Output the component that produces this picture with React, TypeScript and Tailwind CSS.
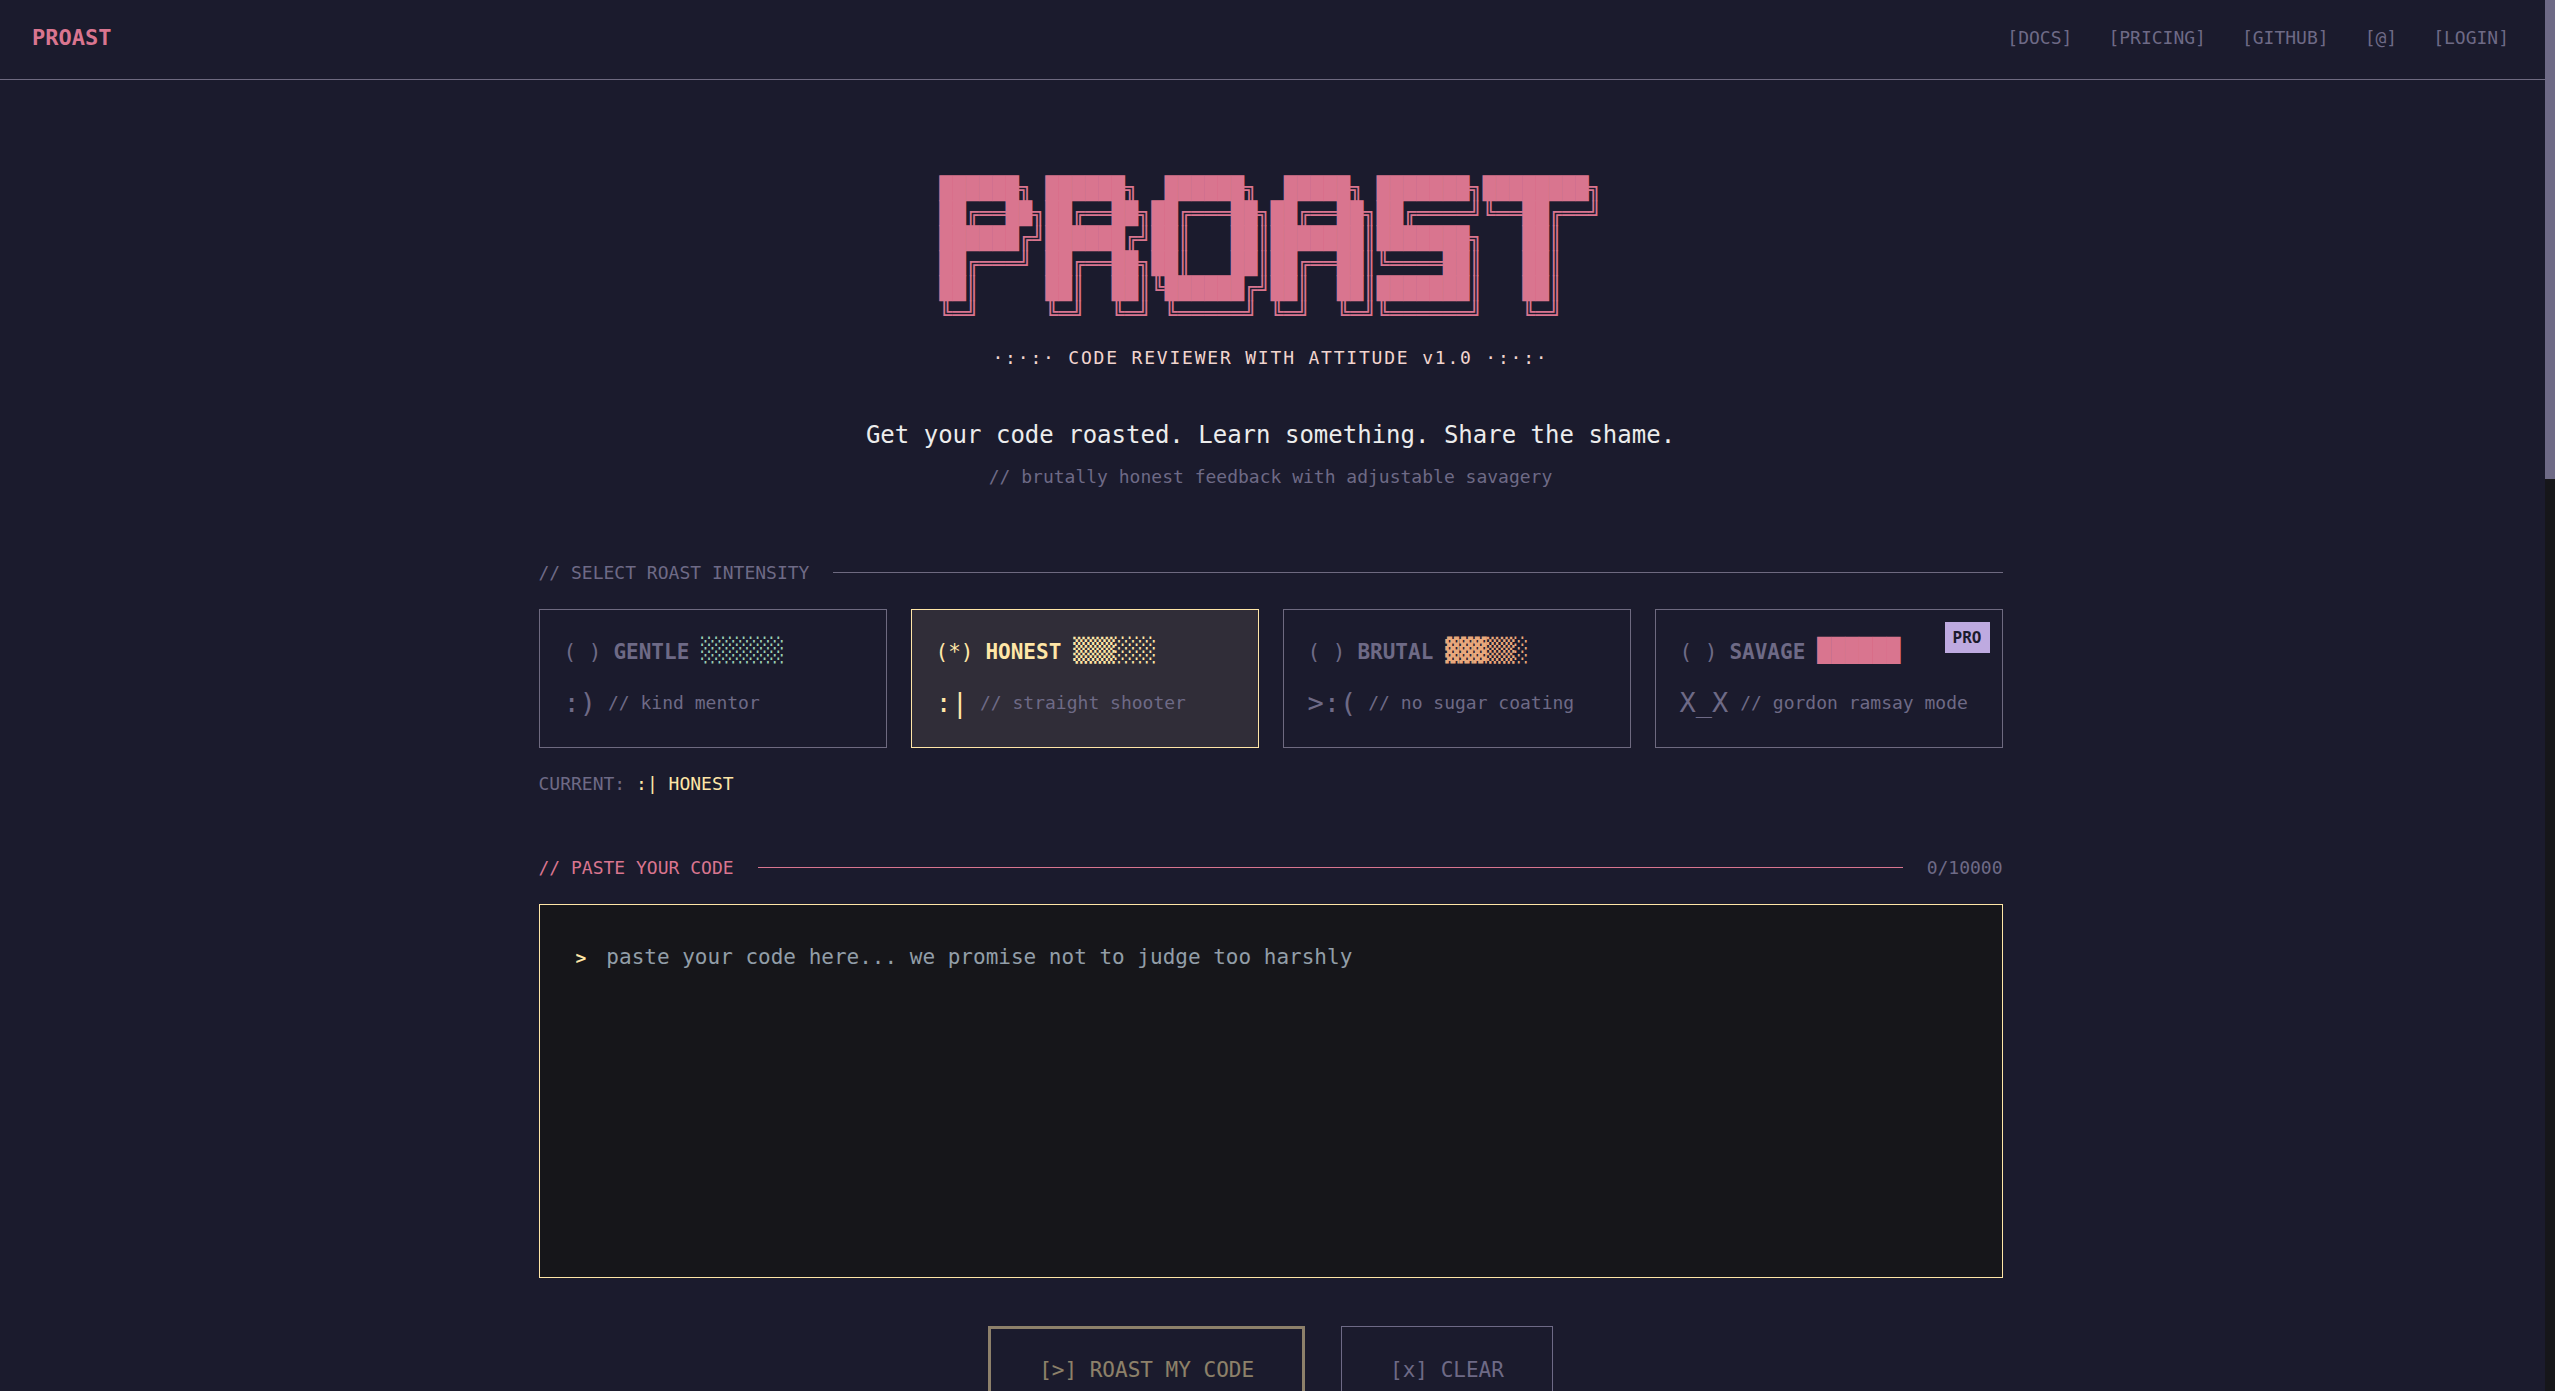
import React, { useState } from 'react';

type Level = {
    id: string;
    name: string;
    meter: string;
    meterColor: string;
    face: string;
    note: string;
    pro?: boolean;
};

const BANNER = [
    '██████╗ ██████╗  ██████╗  █████╗ ███████╗████████╗',
    '██╔══██╗██╔══██╗██╔═══██╗██╔══██╗██╔════╝╚══██╔══╝',
    '██████╔╝██████╔╝██║   ██║███████║███████╗   ██║   ',
    '██╔═══╝ ██╔══██╗██║   ██║██╔══██║╚════██║   ██║   ',
    '██║     ██║  ██║╚██████╔╝██║  ██║███████║   ██║   ',
    '╚═╝     ╚═╝  ╚═╝ ╚═════╝ ╚═╝  ╚═╝╚══════╝   ╚═╝   ',
].join('\n');

const LEVELS: Level[] = [
    { id: 'gentle', name: 'GENTLE', meter: '░░░░░░', meterColor: 'text-[#9ccfb4]', face: ':)', note: '// kind mentor' },
    { id: 'honest', name: 'HONEST', meter: '▒▒▒░░░', meterColor: 'text-[#ffe6a7]', face: ':|', note: '// straight shooter' },
    { id: 'brutal', name: 'BRUTAL', meter: '▓▓▓▒▒░', meterColor: 'text-[#e8a87c]', face: '>:(', note: '// no sugar coating' },
    { id: 'savage', name: 'SAVAGE', meter: '██████', meterColor: 'text-[#d9758f]', face: 'X_X', note: '// gordon ramsay mode', pro: true },
];

const NAV = ['[DOCS]', '[PRICING]', '[GITHUB]', '[@]', '[LOGIN]'];
const MAX_LENGTH = 10000;

const Header = () => (
    <header className="flex items-center justify-between border-b border-[#6e6a80] pt-5 pr-9 pb-6 pl-8">
        <a href="#" className="text-[22px] leading-[35px] font-bold text-[#d9758f]">PROAST</a>
        <nav className="flex gap-9">
            {NAV.map(item => (
                <a key={item} href="#" className="leading-[35px]">{item}</a>
            ))}
        </nav>
    </header>
);

const LevelCard = ({ level, selected, onSelect }: { level: Level; selected: boolean; onSelect: () => void }) => (
    <label
        className={`relative flex h-[139px] cursor-pointer flex-col border px-6 pt-5 ${
            selected ? 'border-[#ffe6a7] bg-[#302d38] text-[#ffe6a7]' : 'border-[#6e6a80]'
        }`}
    >
        <input type="radio" name="intensity" value={level.id} checked={selected} onChange={onSelect} className="sr-only" />
        <span className="flex h-11 items-center gap-3 text-[21px] whitespace-pre">
            <span>{selected ? '(*)' : '( )'}</span>
            <span className="font-bold">{level.name}</span>
            <span className={`pb-1 text-[23px] leading-9 ${level.meterColor}`}>{level.meter}</span>
        </span>
        <span className="mt-1.5 flex h-11 items-center gap-3">
            <span className="text-[27px]">{level.face}</span>
            <span className="text-[#6e6a86]">{level.note}</span>
        </span>
        {level.pro && (
            <span className="absolute top-3 right-3 bg-[#beaae0] px-2 py-1 text-base leading-[23px] font-bold text-[#1b1b2d]">PRO</span>
        )}
    </label>
);

const App = () => {
    const [selectedId, setSelectedId] = useState('honest');
    const [code, setCode] = useState('');
    const current = LEVELS.find(level => level.id === selectedId) || LEVELS[0];

    return (
        <div className="flex h-screen bg-[#1b1b2d] font-['DejaVu_Sans_Mono',monospace] text-[18px] leading-[27px] text-[#6e6a86]">
            <div className="min-w-0 flex-1 overflow-y-auto [scrollbar-width:none]">
                <Header />

                <main className="pr-6 pb-20 pl-5">
                    <div className="mx-auto max-w-[1464px]">
                        {/* Hero */}
                        <section className="flex flex-col items-center pt-24">
                            <pre className="font-['DejaVu_Sans_Mono',monospace] text-[22px] leading-[25px] text-[#d9758f]" aria-label="PROAST">{BANNER}</pre>
                            <p className="mt-[18px] tracking-widest whitespace-pre text-[#f2d5cf]">·:·:· CODE REVIEWER WITH ATTITUDE v1.0 ·:·:·</p>
                            <h1 className="mt-[46px] text-2xl leading-9 text-[#ececec]">Get your code roasted. Learn something. Share the shame.</h1>
                            <p className="mt-2.5">// brutally honest feedback with adjustable savagery</p>
                        </section>

                        {/* Intensity */}
                        <fieldset className="mt-[69px]">
                            <legend className="flex w-full items-center gap-6">
                                // SELECT ROAST INTENSITY
                                <span className="h-px flex-1 bg-[#6e6a80]" />
                            </legend>
                            <div className="mt-[23px] grid grid-cols-4 gap-6">
                                {LEVELS.map(level => (
                                    <LevelCard
                                        key={level.id}
                                        level={level}
                                        selected={level.id === selectedId}
                                        onSelect={() => setSelectedId(level.id)}
                                    />
                                ))}
                            </div>
                            <p className="mt-[22px]">
                                CURRENT: <span className="text-[#ffe6a7]">{current.face} {current.name}</span>
                            </p>
                        </fieldset>

                        {/* Editor */}
                        <section className="mt-[57px]">
                            <div className="flex items-center gap-6">
                                <label htmlFor="code" className="text-[#d9758f]">// PASTE YOUR CODE</label>
                                <span className="h-px flex-1 bg-[#d9758f]" />
                                <span>{code.length}/{MAX_LENGTH}</span>
                            </div>
                            <div className="mt-[23px] flex h-[374px] gap-5 border border-[#ffe6a7] bg-[#16161a] px-9 py-9">
                                <span className="pt-[3px] font-bold text-[#ffe6a7]">&gt;</span>
                                <textarea
                                    id="code"
                                    value={code}
                                    maxLength={MAX_LENGTH}
                                    onChange={e => setCode(e.target.value)}
                                    placeholder="paste your code here... we promise not to judge too harshly"
                                    className="min-w-0 flex-1 resize-none bg-transparent text-[21px] leading-8 text-[#ececec] outline-none placeholder:text-[#929ea8]"
                                />
                            </div>
                        </section>

                        <div className="mt-12 flex justify-center gap-9 text-[21px] leading-8">
                            <button
                                type="button"
                                disabled={code.length === 0}
                                className="border-3 border-[#ffe6a7] px-12 py-[25px] text-[#ffe6a7] disabled:opacity-50"
                            >
                                [&gt;] ROAST MY CODE
                            </button>
                            <button type="button" onClick={() => setCode('')} className="border border-[#6e6a86] px-12 py-[25px]">
                                [x] CLEAR
                            </button>
                        </div>
                    </div>
                </main>
            </div>

            {/* Scroll track */}
            <div className="w-2.5 shrink-0 bg-[#16161a]" aria-hidden="true">
                <div className="h-[34.4%] bg-[#6e6a86]" />
            </div>
        </div>
    );
};

export default App;
